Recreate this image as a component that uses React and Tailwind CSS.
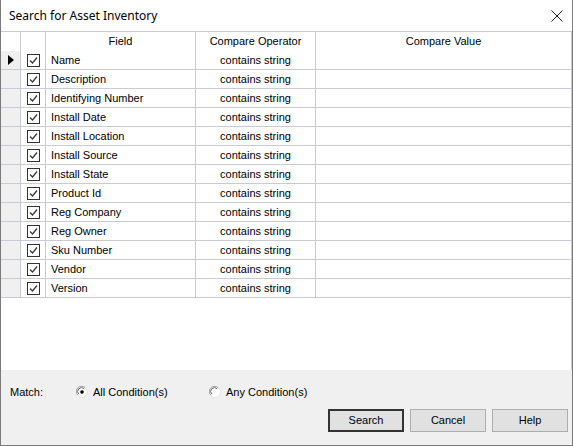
import { useState } from 'react'

const fields = [
  'Name',
  'Description',
  'Identifying Number',
  'Install Date',
  'Install Location',
  'Install Source',
  'Install State',
  'Product Id',
  'Reg Company',
  'Reg Owner',
  'Sku Number',
  'Vendor',
  'Version',
]

function Check() {
  return (
    <svg width="13" height="13" viewBox="0 0 13 13">
      <rect x="0.5" y="0.5" width="12" height="12" fill="#fff" stroke="#333" />
      <path d="M3 6.5 L5.5 9 L10 3.5" fill="none" stroke="#333" strokeWidth="1.2" />
    </svg>
  )
}

function Radio({ checked }) {
  return (
    <svg width="12" height="12" viewBox="0 0 12 12">
      <circle cx="6" cy="6" r="5.5" fill="#fff" stroke="#e3e3e3" />
      <path d="M1.8 9.2 A5 5 0 0 1 9.2 1.8" fill="none" stroke="#a0a0a0" />
      <path d="M2.8 8.2 A3.6 3.6 0 0 1 8.2 2.8" fill="none" stroke="#696969" />
      {checked && <circle cx="6" cy="6" r="1.8" fill="#000" />}
    </svg>
  )
}

function Btn({ children, primary }) {
  return (
    <button
      className={
        primary
          ? 'w-[76px] h-[23px] bg-[#e1e1e1] border-2 border-[#333] text-[11px] text-black'
          : 'w-[76px] h-[23px] bg-[#e1e1e1] border border-[#adadad] text-[11px] text-black'
      }
    >
      {children}
    </button>
  )
}

export default function App() {
  const [match, setMatch] = useState('all')

  return (
    <div
      className="w-[573px] h-[446px] bg-white border-l border-r border-b border-[#7a7a7a] flex flex-col overflow-hidden"
      style={{ fontFamily: '"Liberation Sans", Arial, sans-serif' }}
    >
      {/* title bar */}
      <div className="h-[31px] flex items-center justify-between pl-[8px] pr-[9px] shrink-0">
        <span className="text-[12px] text-black" style={{ fontFamily: '"Noto Sans", "Liberation Sans", sans-serif' }}>
          Search for Asset Inventory
        </span>
        <svg width="12" height="12" viewBox="0 0 12 12">
          <path d="M0.5 0.5 L11.5 11.5 M11.5 0.5 L0.5 11.5" stroke="#222" strokeWidth="1" />
        </svg>
      </div>

      {/* grid */}
      <div className="flex-1 border-t border-r border-[#c8ccd2] text-[11px] text-black">
        <div className="flex h-[19px]">
          <div className="w-[20px] border-r border-[#c8ccd2]" />
          <div className="w-[25px] border-r border-[#c8ccd2]" />
          <div className="w-[150px] border-r border-[#c8ccd2] flex items-center justify-center">Field</div>
          <div className="w-[120px] border-r border-[#c8ccd2] flex items-center justify-center">Compare Operator</div>
          <div className="flex-1 flex items-center justify-center">Compare Value</div>
        </div>
        {fields.map((f, i) => (
          <div key={f} className="flex h-[19px] border-b border-[#c8ccd2]">
            <div className="w-[20px] bg-[#f0f0f0] border-r border-[#c8ccd2] flex items-center justify-center">
              {i === 0 && (
                <svg width="6" height="10" viewBox="0 0 6 10">
                  <path d="M0 0 L6 5 L0 10 Z" fill="#000" />
                </svg>
              )}
            </div>
            <div className="w-[25px] border-r border-[#c8ccd2] flex items-center justify-center">
              <Check />
            </div>
            <div className="w-[150px] border-r border-[#c8ccd2] flex items-center pl-[5px]">{f}</div>
            <div className="w-[120px] border-r border-[#c8ccd2] flex items-center justify-center">contains string</div>
            <div className="flex-1" />
          </div>
        ))}
      </div>

      {/* bottom panel */}
      <div className="h-[75px] bg-[#f0f0f0] shrink-0 flex flex-col text-[11px] text-black">
        <div className="flex items-center h-[22px] mt-[11px] pl-[9px]">
          <span className="w-[66px]">Match:</span>
          <label className="flex items-center gap-[5px] w-[133px]" onClick={() => setMatch('all')}>
            <Radio checked={match === 'all'} />
            <span>All Condition(s)</span>
          </label>
          <label className="flex items-center gap-[5px]" onClick={() => setMatch('any')}>
            <Radio checked={match === 'any'} />
            <span>Any Condition(s)</span>
          </label>
        </div>
        <div className="flex justify-end gap-[6px] mt-[6px] pr-[4px]">
          <Btn primary>Search</Btn>
          <Btn>Cancel</Btn>
          <Btn>Help</Btn>
        </div>
      </div>
    </div>
  )
}
